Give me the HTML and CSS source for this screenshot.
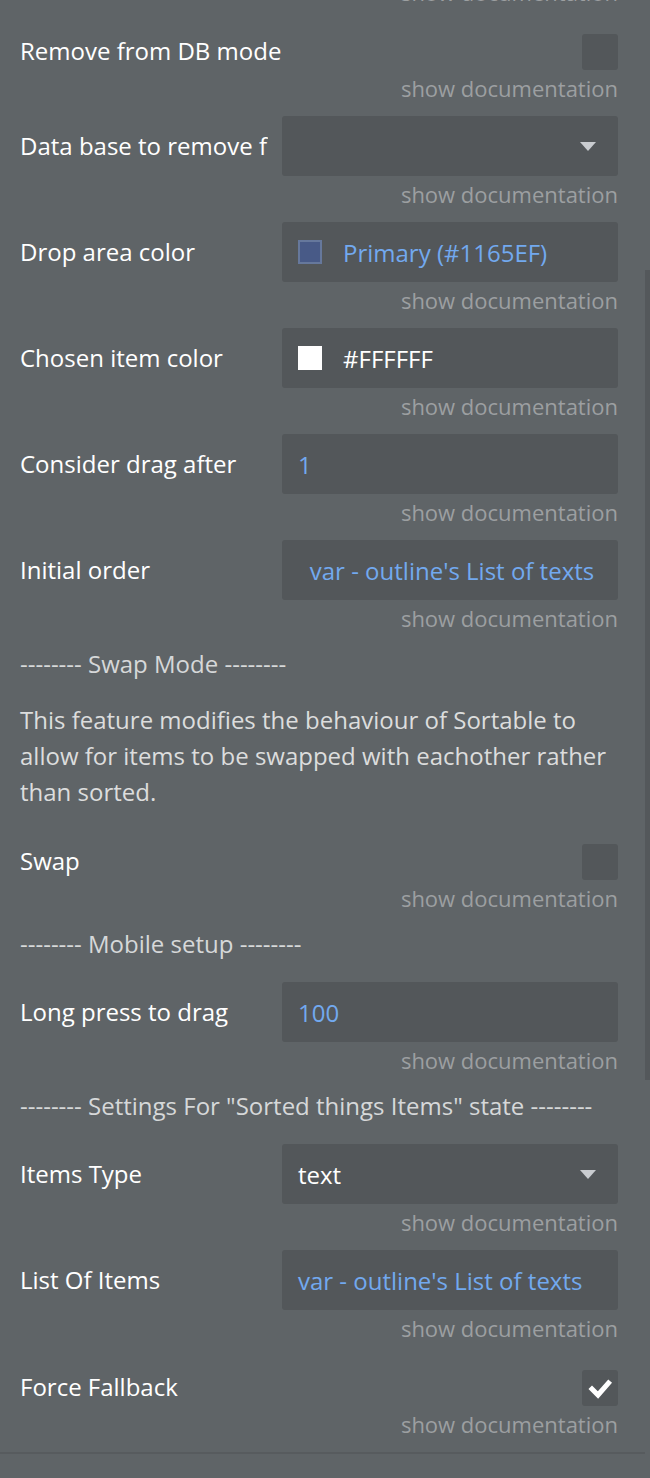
FILE: index.html
```html
<!DOCTYPE html>
<html>
<head>
<meta charset="utf-8">
<link rel="stylesheet" href="styles.css">
</head>
<body>
<div class="panel">
  <div class="doc">show documentation</div>

  <div class="row row-check">
    <div class="label">Remove from DB mode</div>
    <div class="checkbox"></div>
  </div>
  <div class="doc">show documentation</div>

  <div class="row">
    <div class="label">Data base to remove from</div>
    <div class="field field-drop"><span class="value"></span><span class="caret"></span></div>
  </div>
  <div class="doc">show documentation</div>

  <div class="row">
    <div class="label">Drop area color</div>
    <div class="field"><span class="swatch swatch-primary"></span><span class="value blue">Primary (#1165EF)</span></div>
  </div>
  <div class="doc">show documentation</div>

  <div class="row">
    <div class="label">Chosen item color</div>
    <div class="field"><span class="swatch swatch-white"></span><span class="value">#FFFFFF</span></div>
  </div>
  <div class="doc">show documentation</div>

  <div class="row">
    <div class="label">Consider drag after</div>
    <div class="field"><span class="value blue">1</span></div>
  </div>
  <div class="doc">show documentation</div>

  <div class="row">
    <div class="label">Initial order</div>
    <div class="field field-center"><span class="value blue">var - outline's List of texts</span></div>
  </div>
  <div class="doc">show documentation</div>

  <div class="section">-------- Swap Mode --------</div>
  <p class="desc">This feature modifies the behaviour of Sortable to allow for items to be swapped with eachother rather than sorted.</p>

  <div class="row row-check">
    <div class="label">Swap</div>
    <div class="checkbox"></div>
  </div>
  <div class="doc">show documentation</div>

  <div class="section">-------- Mobile setup --------</div>

  <div class="row">
    <div class="label">Long press to drag</div>
    <div class="field"><span class="value blue">100</span></div>
  </div>
  <div class="doc">show documentation</div>

  <div class="section">-------- Settings For "Sorted things Items" state --------</div>

  <div class="row">
    <div class="label">Items Type</div>
    <div class="field field-drop"><span class="value">text</span><span class="caret"></span></div>
  </div>
  <div class="doc">show documentation</div>

  <div class="row">
    <div class="label">List Of Items</div>
    <div class="field"><span class="value blue">var - outline's List of texts</span></div>
  </div>
  <div class="doc">show documentation</div>

  <div class="row row-check">
    <div class="label">Force Fallback</div>
    <div class="checkbox checked">
      <svg width="36" height="36" viewBox="0 0 36 36"><polyline points="10,19 16,25 26.5,13" fill="none" stroke="#ffffff" stroke-width="5" stroke-linecap="square" stroke-linejoin="miter"/></svg>
    </div>
  </div>
  <div class="doc">show documentation</div>
</div>
<div class="divider"></div>
<div class="scroll-thumb"></div>
</body>
</html>
```
FILE: styles.css
```css
html, body {
  margin: 0;
  padding: 0;
}
body {
  background: #5f6467;
  width: 650px;
  height: 1478px;
  overflow: hidden;
  position: relative;
  font-family: "Open Sans", "Noto Sans", sans-serif;
  color: #ffffff;
}
.panel {
  margin-top: -26px;
  padding: 0 32px 0 20px;
}
.doc {
  text-align: right;
  font-size: 22px;
  line-height: 28px;
  color: #9c9fa1;
  margin: 4px 0 14px;
  white-space: nowrap;
}
.row {
  display: flex;
  align-items: center;
  height: 60px;
}
.row-check {
  height: 36px;
  padding-top: 14px;
}
.label {
  font-size: 24px;
  line-height: 32px;
  color: #ffffff;
  width: 248px;
  margin-right: 14px;
  white-space: nowrap;
  overflow: hidden;
  flex: none;
}
.row-check .label {
  flex: 1;
  width: auto;
  margin-top: -3px;
}
.field {
  flex: 1;
  height: 60px;
  background: #53575a;
  border-radius: 3px;
  display: flex;
  align-items: center;
  padding: 0 22px 0 16px;
  font-size: 24px;
  box-sizing: border-box;
}
.field-center {
  justify-content: center;
  padding: 0 14px 0 18px;
}
.field-drop .value {
  flex: 1;
}
.value {
  white-space: nowrap;
  color: #ffffff;
}
.value.blue {
  color: #72a9ef;
}
.caret {
  width: 0;
  height: 0;
  border-left: 8px solid transparent;
  border-right: 8px solid transparent;
  border-top: 9px solid #c9ccd0;
}
.swatch {
  width: 24px;
  height: 24px;
  box-sizing: border-box;
  margin-right: 21px;
  flex: none;
}
.swatch-primary {
  background: #485a87;
  border: 2px solid #66789c;
}
.swatch-white {
  background: #ffffff;
}
.checkbox {
  width: 36px;
  height: 36px;
  background: #53575a;
  border-radius: 3px;
  flex: none;
}
.checkbox svg {
  display: block;
}
.section {
  font-size: 24px;
  line-height: 36px;
  color: #d6d8d9;
  margin-bottom: 20px;
  white-space: nowrap;
}
.desc {
  margin: 0 0 20px;
  font-size: 24px;
  line-height: 36px;
  color: #dcdddd;
}
.divider {
  margin-top: 9px;
  margin-right: 5px;
  height: 2px;
  background: #575b5e;
}
.scroll-thumb {
  position: absolute;
  right: 0;
  top: 270px;
  width: 5px;
  height: 810px;
  background: #54585b;
}
```
